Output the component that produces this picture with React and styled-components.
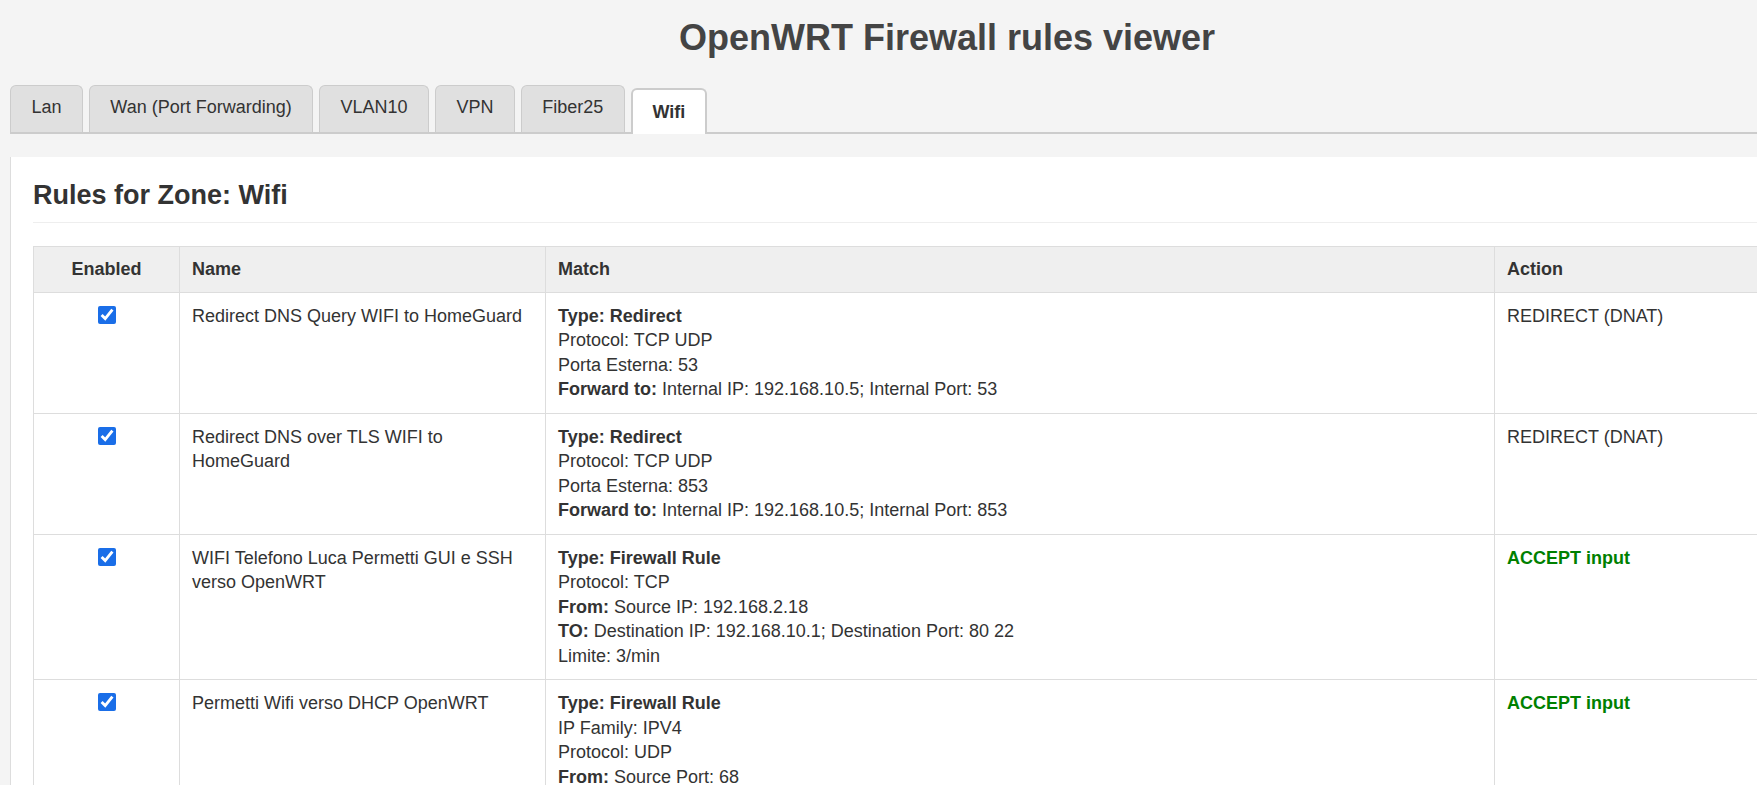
import React, { useState } from 'react'
import styled, { createGlobalStyle } from 'styled-components'

const zones = [ 'Lan', 'Wan (Port Forwarding)', 'VLAN10', 'VPN', 'Fiber25', 'Wifi' ]

const rules = [
	{
		name: 'Redirect DNS Query WIFI to HomeGuard',
		match: [
			{ b: 'Type: Redirect' },
			{ t: 'Protocol: TCP UDP' },
			{ t: 'Porta Esterna: 53' },
			{ b: 'Forward to:', t: ' Internal IP: 192.168.10.5; Internal Port: 53' }
		],
		action: 'REDIRECT (DNAT)'
	},
	{
		name: 'Redirect DNS over TLS WIFI to HomeGuard',
		match: [
			{ b: 'Type: Redirect' },
			{ t: 'Protocol: TCP UDP' },
			{ t: 'Porta Esterna: 853' },
			{ b: 'Forward to:', t: ' Internal IP: 192.168.10.5; Internal Port: 853' }
		],
		action: 'REDIRECT (DNAT)'
	},
	{
		name: 'WIFI Telefono Luca Permetti GUI e SSH verso OpenWRT',
		match: [
			{ b: 'Type: Firewall Rule' },
			{ t: 'Protocol: TCP' },
			{ b: 'From:', t: ' Source IP: 192.168.2.18' },
			{ b: 'TO:', t: ' Destination IP: 192.168.10.1; Destination Port: 80 22' },
			{ t: 'Limite: 3/min' }
		],
		action: 'ACCEPT input',
		accept: true
	},
	{
		name: 'Permetti Wifi verso DHCP OpenWRT',
		match: [
			{ b: 'Type: Firewall Rule' },
			{ t: 'IP Family: IPV4' },
			{ t: 'Protocol: UDP' },
			{ b: 'From:', t: ' Source Port: 68' },
			{ b: 'TO:', t: ' Destination Port: 67' }
		],
		action: 'ACCEPT input',
		accept: true
	}
]

const App = () => {
	let [ active, setActive ] = useState('Wifi')

	function renderMatch(lines) {
		return lines.map((line, i) => (
			<MatchLine key={ 'line' + i }>
				{ line.b && <strong>{ line.b }</strong> }
				{ line.t }
			</MatchLine>
		))
	}

	return (
		<Page>
			<GlobalStyle />
			<Title>OpenWRT Firewall rules viewer</Title>
			<TabBar>
				{ zones.map(zone => (
					<Tab key={ zone } $active={ zone === active } onClick={ () => setActive(zone) }>
						{ zone }
					</Tab>
				)) }
			</TabBar>
			<Panel>
				<ZoneTitle>Rules for Zone: { active }</ZoneTitle>
				<RulesTable>
					<colgroup>
						<col style={ { width: 146 } } />
						<col style={ { width: 366 } } />
						<col style={ { width: 949 } } />
						<col />
					</colgroup>
					<thead>
						<tr>
							<Th $center>Enabled</Th>
							<Th>Name</Th>
							<Th>Match</Th>
							<Th>Action</Th>
						</tr>
					</thead>
					<tbody>
						{ rules.map((rule, i) => (
							<tr key={ 'rule' + i }>
								<Td $center><Check type="checkbox" defaultChecked /></Td>
								<Td>{ rule.name }</Td>
								<Td>{ renderMatch(rule.match) }</Td>
								<Td><Action $accept={ rule.accept }>{ rule.action }</Action></Td>
							</tr>
						)) }
					</tbody>
				</RulesTable>
			</Panel>
		</Page>
	)
}

export default App

const GlobalStyle = createGlobalStyle`
	html, body {
		margin: 0;
		padding: 0;
		background: #f4f4f4;
		overflow: hidden;
	}

	body {
		font-family: "Liberation Sans", Arial, sans-serif;
		font-size: 18px;
		line-height: 1.35;
		color: #333;
	}
`

const Page = styled.div`
	width: 1874px;
	padding: 0 10px;
`

const Title = styled.h1`
	margin: 14px 0 22px;
	text-align: center;
	font-size: 36px;
	line-height: 1.35;
	color: #444;
`

const TabBar = styled.div`
	display: flex;
	align-items: flex-end;
	gap: 5.8px;
	border-bottom: 2px solid #ccc;
`

const Tab = styled.button`
	font: inherit;
	line-height: 24.3px;
	color: #333;
	cursor: pointer;
	border-radius: 6px 6px 0 0;
	${ p => p.$active ? `
		background: #fff;
		border: 2px solid #ccc;
		border-bottom: none;
		padding: 10px 20px 10px;
		margin-bottom: -2px;
		font-weight: bold;
	` : `
		background: #e0e0e0;
		border: 1px solid #ccc;
		border-bottom: none;
		padding: 9px 20.5px 13px;
	` }
`

const Panel = styled.div`
	margin-top: 23px;
	background: #fff;
	border-left: 1px solid #ddd;
	padding: 20px 22px;
	min-height: 700px;
`

const ZoneTitle = styled.h2`
	margin: 0 0 23px;
	padding-bottom: 9px;
	font-size: 27px;
	line-height: 1.35;
	border-bottom: 1px solid #eee;
`

const RulesTable = styled.table`
	width: 100%;
	border-collapse: collapse;
	table-layout: fixed;
`

const Th = styled.th`
	background: #efefef;
	border: 1px solid #ddd;
	padding: 10px 12px;
	text-align: ${ p => p.$center ? 'center' : 'left' };
	line-height: 24.3px;
`

const Td = styled.td`
	border: 1px solid #ddd;
	padding: 11px 12px;
	vertical-align: top;
	text-align: ${ p => p.$center ? 'center' : 'left' };
	line-height: 24.5px;
`

const Check = styled.input`
	width: 18px;
	height: 18px;
	margin: 2px 0 0;
	accent-color: #1a6ee8;
`

const MatchLine = styled.div`
	strong {
		font-weight: bold;
	}
`

const Action = styled.span`
	color: ${ p => p.$accept ? '#008000' : '#333' };
	font-weight: ${ p => p.$accept ? 'bold' : 'normal' };
`
